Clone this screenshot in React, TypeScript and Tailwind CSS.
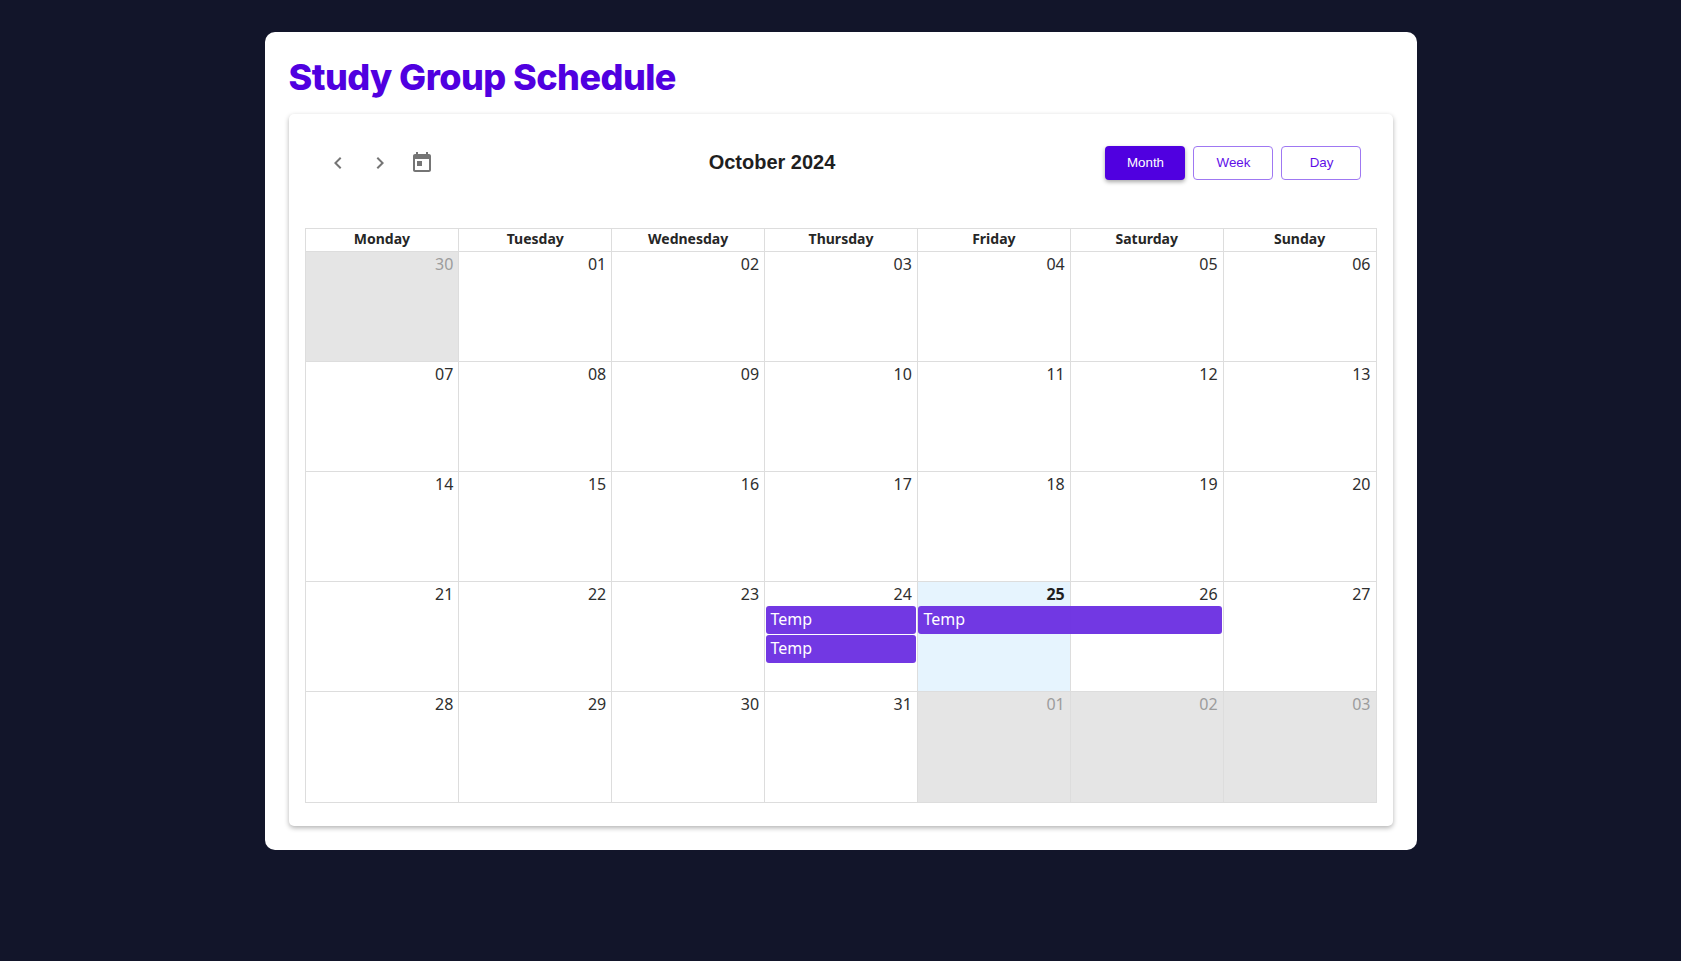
const DAYS = ['Monday', 'Tuesday', 'Wednesday', 'Thursday', 'Friday', 'Saturday', 'Sunday'];

const COL_START = [
  'col-start-1',
  'col-start-2',
  'col-start-3',
  'col-start-4',
  'col-start-5',
  'col-start-6',
  'col-start-7',
];

type Day = { label: string; outside?: boolean; today?: boolean };
type CalEvent = { title: string; col: string; row: string };

const WEEKS: { days: Day[]; events?: CalEvent[] }[] = [
  {
    days: [
      { label: '30', outside: true },
      { label: '01' },
      { label: '02' },
      { label: '03' },
      { label: '04' },
      { label: '05' },
      { label: '06' },
    ],
  },
  { days: ['07', '08', '09', '10', '11', '12', '13'].map((label) => ({ label })) },
  { days: ['14', '15', '16', '17', '18', '19', '20'].map((label) => ({ label })) },
  {
    days: [
      { label: '21' },
      { label: '22' },
      { label: '23' },
      { label: '24' },
      { label: '25', today: true },
      { label: '26' },
      { label: '27' },
    ],
    events: [
      { title: 'Temp', col: 'col-start-4 col-span-1', row: 'row-start-2' },
      { title: 'Temp', col: 'col-start-5 col-span-2', row: 'row-start-2' },
      { title: 'Temp', col: 'col-start-4 col-span-1', row: 'row-start-3' },
    ],
  },
  {
    days: [
      { label: '28' },
      { label: '29' },
      { label: '30' },
      { label: '31' },
      { label: '01', outside: true },
      { label: '02', outside: true },
      { label: '03', outside: true },
    ],
  },
];

function ToolbarIcon({ d }: { d: string }) {
  return (
    <button type="button" className="flex h-[42px] w-[42px] items-center justify-center">
      <svg viewBox="0 0 24 24" className="h-6 w-6 fill-[#757575]">
        <path d={d} />
      </svg>
    </button>
  );
}

function ViewButton({ label, active }: { label: string; active?: boolean }) {
  return (
    <button
      type="button"
      className={
        active
          ? "h-[34px] w-20 rounded-[4px] bg-[#5000e0] font-['Liberation_Sans',sans-serif] text-[13.33px] text-white shadow-[0_2px_4px_rgba(0,0,0,0.35)]"
          : "h-[34px] w-20 rounded-[4px] border border-[#9f78f2] bg-white font-['Liberation_Sans',sans-serif] text-[13.33px] text-[#5f0fe8]"
      }
    >
      {label}
    </button>
  );
}

function DayCell({ day, index }: { day: Day; index: number }) {
  let tone = 'bg-white text-[#2e2e2e]';
  if (day.outside) tone = 'bg-[#e5e5e5] text-[#9c9c9c]';
  if (day.today) tone = 'bg-[#e6f4fe] text-[#1f1f1f] font-bold';

  return (
    <div
      className={`${COL_START[index]} row-span-full row-start-1 border-[#dddddd] pt-[1px] pr-[5px] text-right text-[16px] leading-[22px] ${index > 0 ? 'border-l' : ''} ${tone}`}
    >
      {day.label}
    </div>
  );
}

export default function App() {
  return (
    <div className="flex min-h-screen justify-center bg-[#12152a] pt-8 font-['Noto_Sans',sans-serif]">
      <div className="h-[818px] w-[1152px] rounded-[10px] bg-white p-6">
        <h1 className="h-[58px] font-['Inter',sans-serif] text-[36px] leading-[42px] font-extrabold tracking-[-0.55px] text-[#5000e0]">
          Study Group Schedule
        </h1>
        <div className="h-[712px] rounded-[5px] bg-white px-4 pt-4 shadow-[0_2px_5px_rgba(0,0,0,0.3)]">
          <div className="flex items-center justify-between pt-3 pr-[15px] pb-11 pl-3">
            <div className="flex items-center">
              <ToolbarIcon d="M15.41 7.41 14 6l-6 6 6 6 1.41-1.41L10.83 12z" />
              <ToolbarIcon d="M10 6 8.59 7.41 13.17 12l-4.58 4.59L10 18l6-6z" />
              <ToolbarIcon d="M19 3h-1V1h-2v2H8V1H6v2H5c-1.11 0-1.99.9-1.99 2L3 19c0 1.1.89 2 2 2h14c1.1 0 2-.9 2-2V5c0-1.1-.9-2-2-2zm0 16H5V8h14v11zM7 10h5v5H7z" />
            </div>
            <h2 className="mr-1 mb-[2px] font-['Liberation_Sans',sans-serif] text-[20px] font-bold text-[#1f1f1f]">
              October 2024
            </h2>
            <div className="flex gap-2">
              <ViewButton label="Month" active />
              <ViewButton label="Week" />
              <ViewButton label="Day" />
            </div>
          </div>

          <div className="border border-[#dddddd]">
            <div className="grid h-[23px] grid-cols-7 border-b border-[#dddddd]">
              {DAYS.map((day, i) => (
                <div
                  key={day}
                  className={`border-[#dddddd] text-center text-[14px] leading-[20px] font-bold text-[#262626] ${i > 0 ? 'border-l' : ''}`}
                >
                  {day}
                </div>
              ))}
            </div>
            {WEEKS.map((week, w) => (
              <div
                key={w}
                className="grid h-[110px] grid-cols-7 grid-rows-[24px_29px_29px_1fr] border-b border-[#dddddd] last:border-b-0"
              >
                {week.days.map((day, i) => (
                  <DayCell key={i} day={day} index={i} />
                ))}
                {week.events?.map((ev, i) => (
                  <div
                    key={i}
                    className={`${ev.col} ${ev.row} z-10 mr-[1px] ml-[1.5px] h-[28px] self-start rounded-[3px] bg-[#6a2de2]/95 pl-[5px] text-[16px] leading-[26px] text-white`}
                  >
                    {ev.title}
                  </div>
                ))}
              </div>
            ))}
          </div>
        </div>
      </div>
    </div>
  );
}
